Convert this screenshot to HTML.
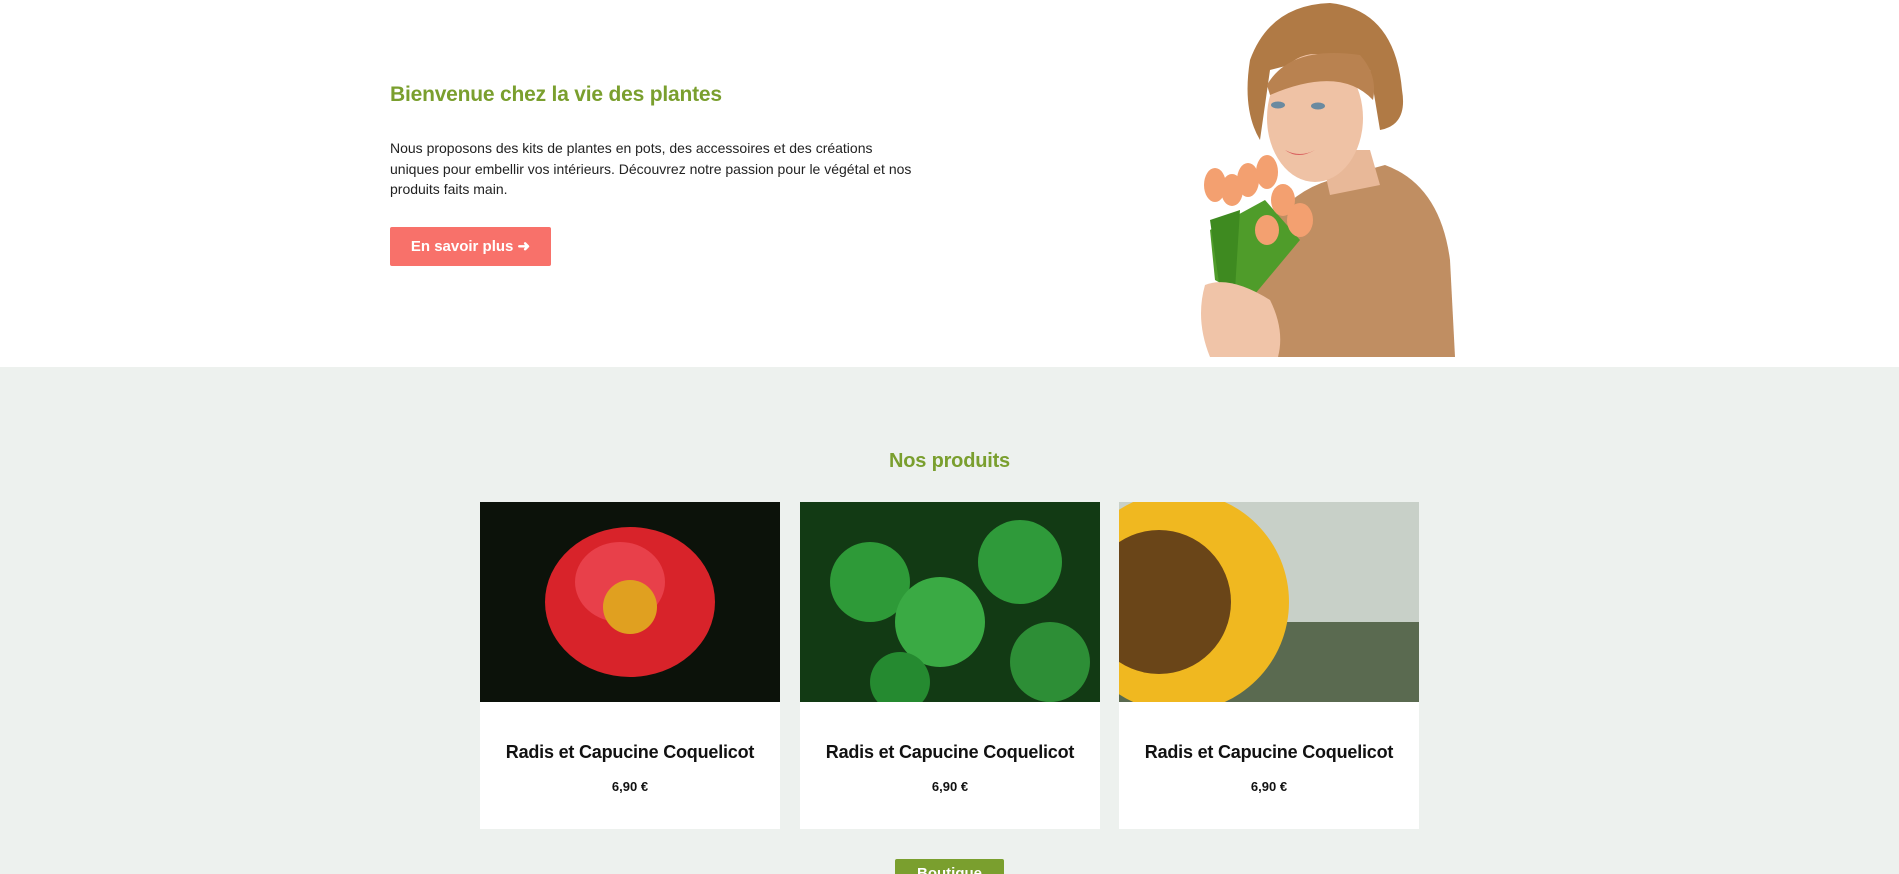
<!DOCTYPE html>
<html><head><meta charset="utf-8"><style>
*{margin:0;padding:0;box-sizing:border-box}
html,body{width:1899px;height:874px;overflow:hidden}
body{background:#fff;font-family:"Liberation Sans",sans-serif;position:relative}
.hero{position:absolute;left:0;top:0;width:1899px;height:367px;background:#fff}
h1{position:absolute;left:390px;top:83px;font-size:21px;font-weight:bold;color:#7a9f2e;letter-spacing:-0.2px}
.p{position:absolute;left:390px;top:138px;width:525px;font-size:14px;line-height:20.5px;color:#222}
.btn{position:absolute;left:390px;top:227px;width:161px;height:39px;background:#f8716a;border-radius:2px;color:#fff;font-weight:bold;font-size:15px;line-height:39px;text-align:center}
.sec{position:absolute;left:0;top:367px;width:1899px;height:507px;background:#edf1ee}
h2{position:absolute;left:0;width:1899px;top:450px;text-align:center;font-size:20px;font-weight:bold;color:#7a9f2e;letter-spacing:-0.2px}
.card{position:absolute;top:502px;width:300px;height:327px;background:#fff}
.card .img{height:200px;overflow:hidden}
.card .t{position:absolute;top:240px;width:100%;text-align:center;font-size:18px;font-weight:bold;color:#111;letter-spacing:-0.2px}
.card .pr{position:absolute;top:277px;width:100%;text-align:center;font-size:13px;font-weight:bold;color:#111}
.b2{position:absolute;left:895px;top:859px;width:109px;height:30px;background:#7a9f2e;border-radius:2px;color:#fff;font-weight:bold;text-align:center;font-size:15px;line-height:30px}
</style></head><body>
<div class="hero">
<h1>Bienvenue chez la vie des plantes</h1>
<div class="p">Nous proposons des kits de plantes en pots, des accessoires et des créations uniques pour embellir vos intérieurs. Découvrez notre passion pour le végétal et nos produits faits main.</div>
<div class="btn">En savoir plus &#10140;</div>
<svg style="position:absolute;left:1170px;top:0" width="300" height="357" viewBox="0 0 300 357">
<path d="M75 357 L85 250 Q110 195 160 180 L215 165 Q270 185 280 260 L285 357 Z" fill="#c08e62"/>
<path d="M150 150 L200 150 L210 185 L160 195 Z" fill="#e8b898"/>
<path d="M80 60 Q100 5 160 3 Q225 10 232 90 Q238 125 210 130 L200 70 Q150 55 100 70 L90 140 Q72 110 80 60Z" fill="#b07a45"/>
<ellipse cx="145" cy="118" rx="48" ry="64" fill="#efc2a5"/>
<path d="M97 85 Q120 45 190 55 Q208 75 203 100 Q170 65 100 95Z" fill="#b98250"/>
<ellipse cx="108" cy="105" rx="7" ry="3.5" fill="#6a8aa0"/><ellipse cx="148" cy="106" rx="7" ry="3.5" fill="#6a8aa0"/>
<path d="M115 150 Q128 160 145 150 Q130 158 115 150Z" fill="#d9605e"/>
<path d="M40 230 L95 200 L130 240 L80 300 L45 280Z" fill="#4f9c2a"/>
<path d="M40 220 L70 210 L65 290 L50 290Z" fill="#3e8a20"/>
<g fill="#f3a070">
<ellipse cx="45" cy="185" rx="11" ry="17"/><ellipse cx="62" cy="190" rx="11" ry="16"/><ellipse cx="78" cy="180" rx="11" ry="17"/>
<ellipse cx="97" cy="172" rx="11" ry="17"/><ellipse cx="113" cy="200" rx="12" ry="16"/><ellipse cx="130" cy="220" rx="13" ry="17"/><ellipse cx="97" cy="230" rx="12" ry="15"/></g>
<path d="M35 285 Q60 275 100 300 Q115 330 108 357 L40 357 Q25 320 35 285Z" fill="#f0c4a8"/>
</svg>
</div>
<div class="sec"></div>
<h2>Nos produits</h2>
<div class="card" style="left:480px"><div class="img"><svg width="300" height="200"><rect width="300" height="200" fill="#0c120a"/><ellipse cx="150" cy="100" rx="85" ry="75" fill="#d8232a"/><ellipse cx="140" cy="80" rx="45" ry="40" fill="#e8404a"/><circle cx="150" cy="105" r="27" fill="#e0a020"/></svg></div><div class="t">Radis et Capucine Coquelicot</div><div class="pr">6,90 €</div></div>
<div class="card" style="left:800px"><div class="img"><svg width="300" height="200"><rect width="300" height="200" fill="#123a14"/><circle cx="70" cy="80" r="40" fill="#2e9a38"/><circle cx="140" cy="120" r="45" fill="#3aaa44"/><circle cx="220" cy="60" r="42" fill="#2f9a3a"/><circle cx="250" cy="160" r="40" fill="#2d8e36"/><circle cx="100" cy="180" r="30" fill="#258a30"/></svg></div><div class="t">Radis et Capucine Coquelicot</div><div class="pr">6,90 €</div></div>
<div class="card" style="left:1119px"><div class="img"><svg width="300" height="200"><rect width="300" height="200" fill="#c8d0c8"/><rect y="120" width="300" height="80" fill="#5a6a50"/><circle cx="60" cy="100" r="110" fill="#f0b820"/><circle cx="40" cy="100" r="72" fill="#6a4518"/></svg></div><div class="t">Radis et Capucine Coquelicot</div><div class="pr">6,90 €</div></div>
<div class="b2">Boutique</div>
</body></html>
